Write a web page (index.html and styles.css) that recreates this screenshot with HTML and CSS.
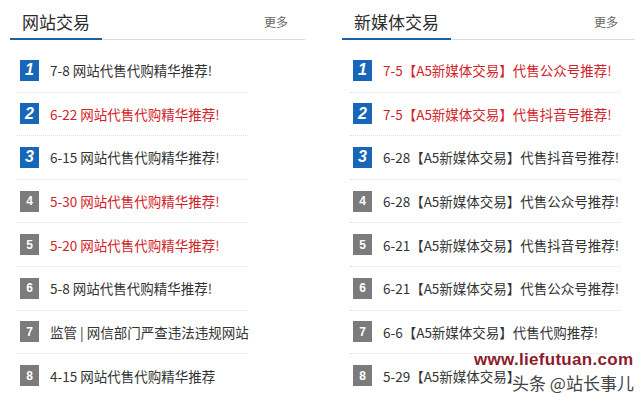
FILE: index.html
```html
<!DOCTYPE html>
<html lang="zh-CN">
<head>
  <meta charset="UTF-8">
  <title>交易推荐</title>
  <link rel="stylesheet" href="styles.css">
</head>
<body>
  <div class="page">
    <div class="panel panel-left">
      <div class="panel-head">
        <h3 class="panel-title">网站交易</h3>
        <a class="more" href="#">更多</a>
      </div>
      <ul class="news-list">
        <li><span class="num blue">1</span><span class="txt">7-8 网站代售代购精华推荐!</span></li>
        <li><span class="num blue">2</span><span class="txt red">6-22 网站代售代购精华推荐!</span></li>
        <li><span class="num blue">3</span><span class="txt">6-15 网站代售代购精华推荐!</span></li>
        <li><span class="num">4</span><span class="txt red">5-30 网站代售代购精华推荐!</span></li>
        <li><span class="num">5</span><span class="txt red">5-20 网站代售代购精华推荐!</span></li>
        <li><span class="num">6</span><span class="txt">5-8 网站代售代购精华推荐!</span></li>
        <li><span class="num">7</span><span class="txt">监管 | 网信部门严查违法违规网站</span></li>
        <li><span class="num">8</span><span class="txt">4-15 网站代售代购精华推荐</span></li>
      </ul>
    </div>
    <div class="panel panel-right">
      <div class="panel-head">
        <h3 class="panel-title">新媒体交易</h3>
        <a class="more" href="#">更多</a>
      </div>
      <ul class="news-list">
        <li><span class="num blue">1</span><span class="txt red">7-5【A5新媒体交易】代售公众号推荐!</span></li>
        <li><span class="num blue">2</span><span class="txt red">7-5【A5新媒体交易】代售抖音号推荐!</span></li>
        <li><span class="num blue">3</span><span class="txt">6-28【A5新媒体交易】代售抖音号推荐!</span></li>
        <li><span class="num">4</span><span class="txt">6-28【A5新媒体交易】代售公众号推荐!</span></li>
        <li><span class="num">5</span><span class="txt">6-21【A5新媒体交易】代售抖音号推荐!</span></li>
        <li><span class="num">6</span><span class="txt">6-21【A5新媒体交易】代售公众号推荐!</span></li>
        <li><span class="num">7</span><span class="txt">6-6【A5新媒体交易】代售代购推荐!</span></li>
        <li><span class="num">8</span><span class="txt">5-29【A5新媒体交易】</span></li>
      </ul>
    </div>

    <!-- 图片水印 -->
    <div class="watermark-site">www.liefutuan.com</div>
    <div class="watermark-author">头条 @站长事儿</div>
  </div>
</body>
</html>
```

FILE: styles.css
```css
* {
  margin: 0;
  padding: 0;
  box-sizing: border-box;
}

body {
  background: #fff;
  font-family: "Noto Sans CJK SC", "Liberation Sans", sans-serif;
  color: #333;
}

.page {
  width: 644px;
  height: 397px;
  padding: 0 9px 0 10px;
  display: flex;
  justify-content: space-between;
  position: relative;
  overflow: hidden;
}

.panel {
  width: 295px;
}

.panel-right {
  width: 293px;
}

.panel-head {
  display: flex;
  justify-content: space-between;
  align-items: center;
  height: 40px;
  border-bottom: 1px solid #dcdcdc;
  padding-right: 17px;
}

.panel-title {
  align-self: flex-end;
  font-size: 17px;
  font-weight: normal;
  line-height: 26px;
  color: #2b2b2b;
  padding: 0 12px 3px;
  border-bottom: 2px solid #1b5fa8;
  margin-bottom: -1px;
}

.more {
  font-size: 12px;
  color: #666;
  text-decoration: none;
  margin-top: 4px;
}

.news-list {
  list-style: none;
  margin: 9px 0 0 7px;
  width: 231px;
}

.panel-right .news-list {
  margin-left: 8px;
  width: 270px;
}

.news-list li {
  display: flex;
  align-items: center;
  height: 43.6px;
  border-bottom: 1px dotted #e0e0e0;
}

.news-list li:last-child {
  border-bottom: none;
}

.num {
  flex: none;
  width: 19px;
  height: 21px;
  margin: 0 11px 0 3px;
  background: #7b7b7b;
  color: #fff;
  font-family: "Liberation Sans", sans-serif;
  font-size: 12px;
  font-weight: bold;
  display: flex;
  align-items: center;
  justify-content: center;
}

.num.blue {
  background: #1766b8;
  font-size: 16px;
  font-style: italic;
}

.txt {
  font-size: 13.5px;
  line-height: 16px;
  white-space: nowrap;
  color: #333;
}

.txt.red {
  color: #d2232a;
}

.watermark-site {
  position: absolute;
  left: 474px;
  top: 352px;
  line-height: 16px;
  font-family: "Liberation Sans", sans-serif;
  font-size: 17px;
  font-weight: bold;
  color: #8c1c2c;
  letter-spacing: 0.3px;
}

.watermark-author {
  position: absolute;
  left: 512px;
  top: 373px;
  line-height: 19px;
  font-size: 17px;
  color: #444;
  text-shadow: 0 0 2px #fff, 0 0 2px #fff, 0 0 3px #fff;
}
```
